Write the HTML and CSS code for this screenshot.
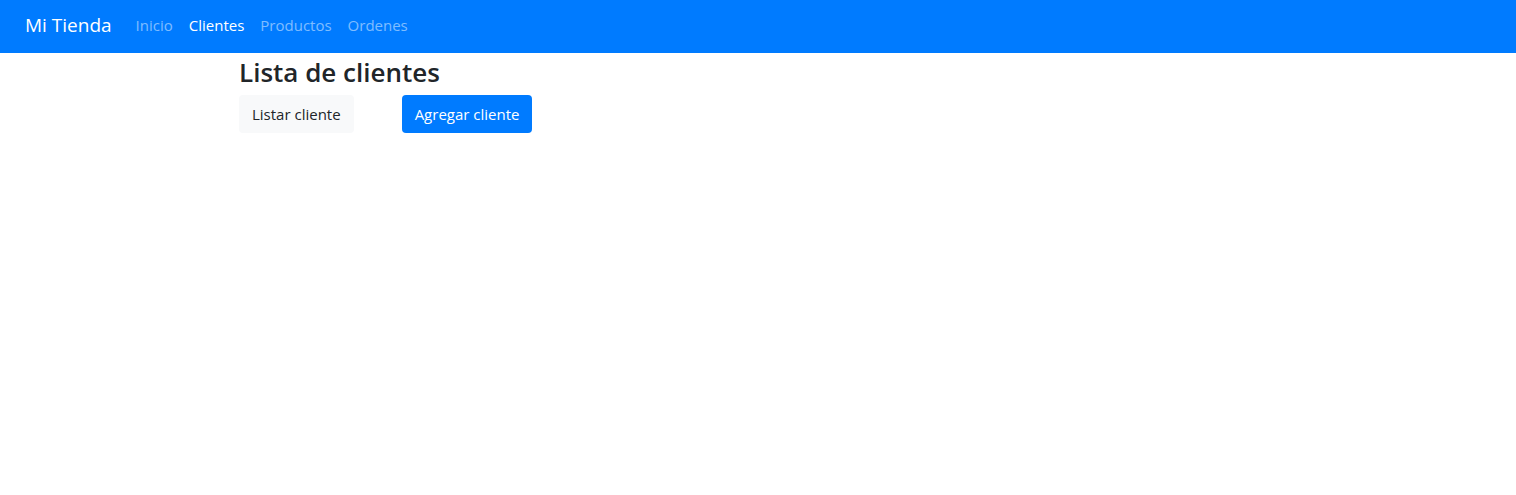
FILE: index.html
```html
<!DOCTYPE html>
<html lang="es">
<head>
<meta charset="utf-8">
<title>Mi Tienda</title>
<link rel="stylesheet" href="styles.css">
</head>
<body>
<nav class="navbar">
  <a class="brand" href="#">Mi Tienda</a>
  <ul class="nav-list">
    <li><a class="nav-link" href="#">Inicio</a></li>
    <li><a class="nav-link active" href="#">Clientes</a></li>
    <li><a class="nav-link" href="#">Productos</a></li>
    <li><a class="nav-link" href="#">Ordenes</a></li>
  </ul>
</nav>
<main class="container">
  <h1 class="title">Lista de clientes</h1>
  <div class="actions">
    <button type="button" class="btn btn-light">Listar cliente</button>
    <button type="button" class="btn btn-primary">Agregar cliente</button>
  </div>
</main>
</body>
</html>
```
FILE: styles.css
```css
*, *::before, *::after { box-sizing: border-box; }
body {
  margin: 0;
  background: #fff;
  color: #212529;
  font-family: "Open Sans", "Noto Sans", sans-serif;
  font-size: 15px;
  line-height: 24px;
}
.navbar {
  display: flex;
  align-items: center;
  gap: 16px;
  padding: 5px 25px 8px;
  background: #007bff;
}
.brand {
  color: #fff;
  font-size: 19px;
  line-height: 30px;
  text-decoration: none;
}
.nav-list {
  display: flex;
  margin: 0;
  padding: 0;
  list-style: none;
}
.nav-link {
  display: block;
  padding: 8px;
  color: rgba(255, 255, 255, 0.5);
  text-decoration: none;
}
.nav-link.active { color: #fff; }
.container {
  max-width: 1140px;
  margin: 0 auto;
  padding: 0 51px;
}
.title {
  margin: 0 0 8px;
  padding-top: 4px;
  font-size: 26px;
  font-weight: 600;
  line-height: 30px;
}
.actions {
  display: flex;
  gap: 48px;
}
.btn {
  padding: 6px 12px;
  border: 1px solid transparent;
  border-radius: 4px;
  font: inherit;
  cursor: pointer;
}
.btn-light { background: #f8f9fa; color: #212529; }
.btn-primary { background: #007bff; color: #fff; }
```
